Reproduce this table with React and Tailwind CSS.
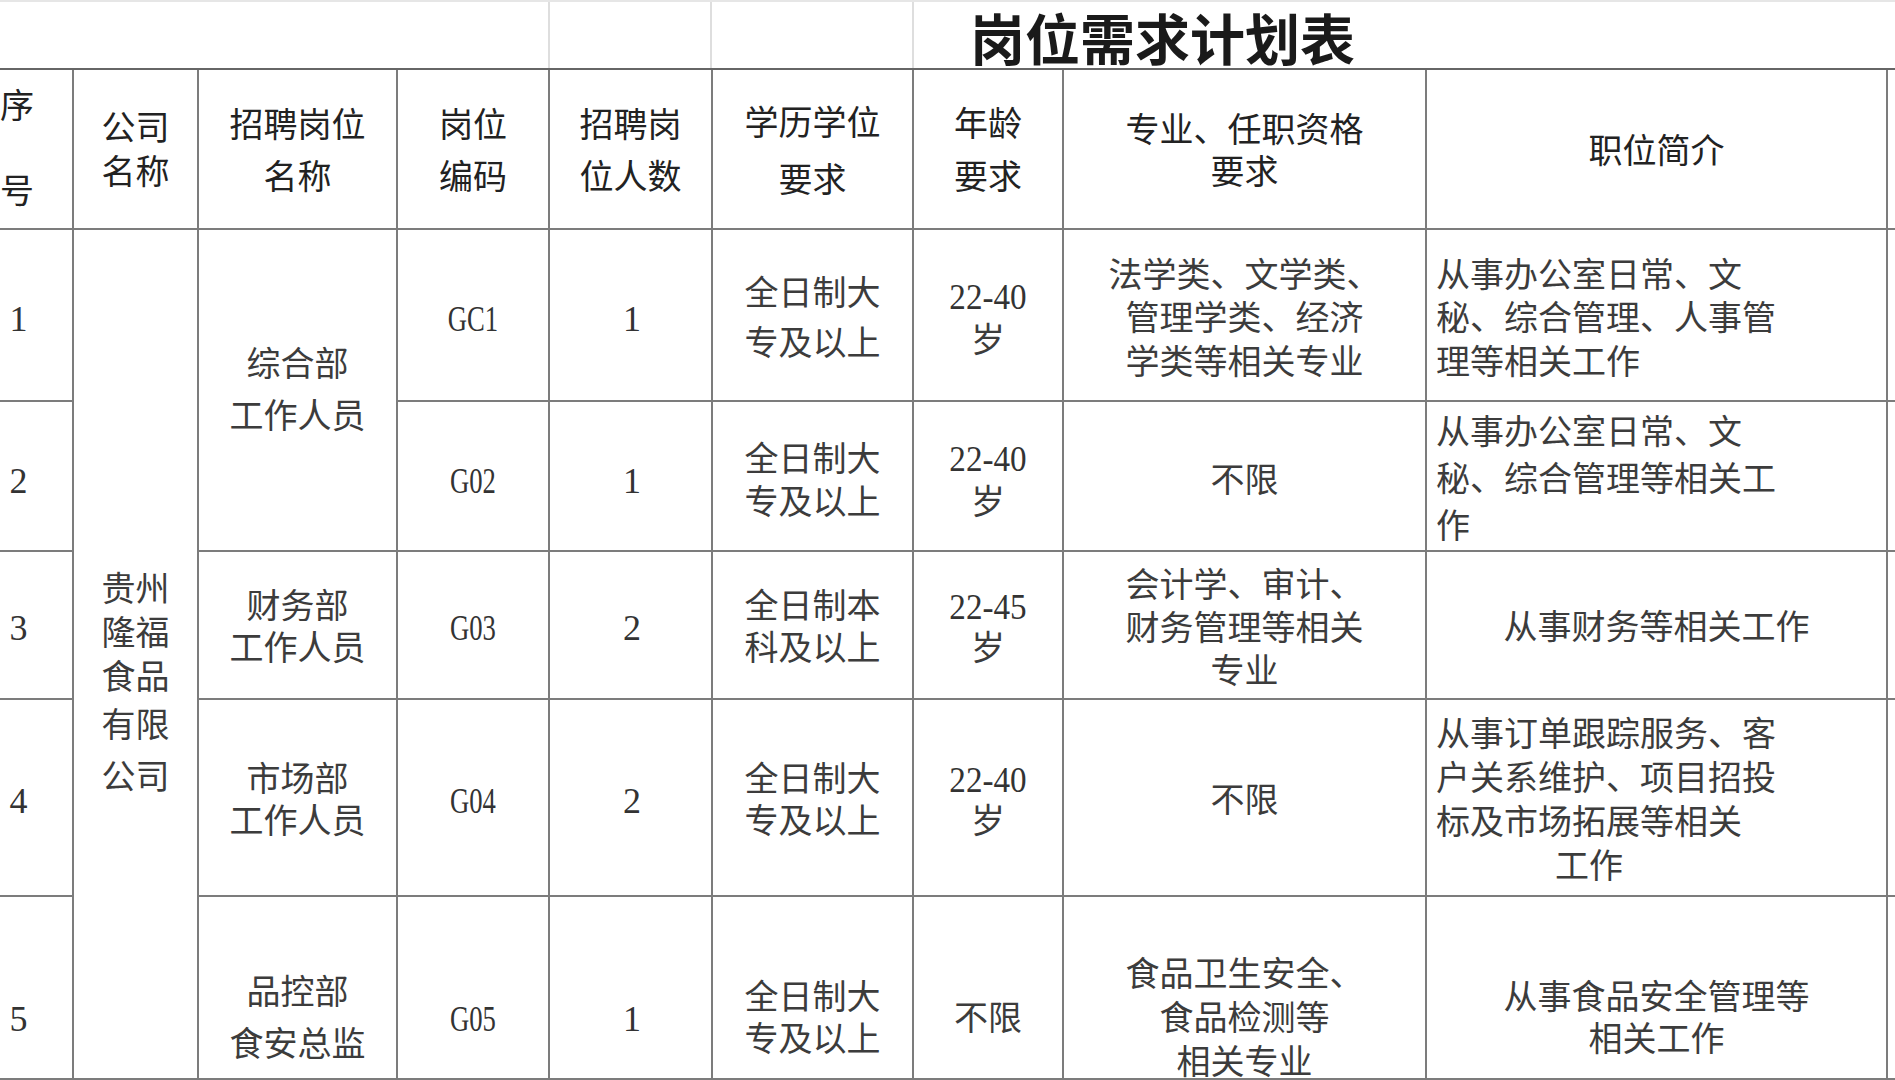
import React from "react";

function Cell({ className = "", children }) {
  return (
    <div
      className={
        "border-r-2 border-b-2 border-[#7c7c7c] flex flex-col justify-center items-center text-center overflow-hidden " +
        className
      }
    >
      {children}
    </div>
  );
}

function Lines({ lines, lh }) {
  return (
    <>
      {lines.map((l, i) => (
        <div key={i} className={"whitespace-nowrap " + lh}>
          {l}
        </div>
      ))}
    </>
  );
}

function Num({ children }) {
  return <span className="text-[36px] leading-none text-[#333] pl-[3px]">{children}</span>;
}

function Code({ children }) {
  return (
    <span className="inline-block text-[36px] leading-none text-[#333] scale-x-[0.74]">{children}</span>
  );
}

function Age({ a }) {
  return (
    <>
      <div className="text-[36px] leading-[44px] text-[#333] scale-x-[0.92]">{a}</div>
      <div className="leading-[44px]">岁</div>
    </>
  );
}

function R5({ className = "", children }) {
  return (
    <Cell className="justify-start">
      <div className={"h-[244px] shrink-0 w-full flex flex-col justify-center items-center " + className}>
        {children}
      </div>
    </Cell>
  );
}

export default function App() {
  return (
    <div className="w-[1895px] h-[1080px] overflow-hidden bg-white text-[34px] text-[#3c3c3c] font-['Liberation_Serif','Noto_Sans_CJK_SC',serif]">
      {/* title row */}
      <div className="flex h-[68px] border-t-2 border-[#e6e6e6] -ml-[38px]">
        <div className="w-[588px] border-r-2 border-[#dedede]" />
        <div className="w-[162px] border-r-2 border-[#dedede]" />
        <div className="w-[202px] border-r-2 border-[#dedede]" />
        <div className="flex-1 flex items-center pl-[56px] pt-[12px]">
          <span className="text-[55px] leading-none font-bold text-[#1a1a1a]">岗位需求计划表</span>
        </div>
      </div>

      <div className="grid -ml-[38px] w-max border-t-2 border-[#666] grid-cols-[112px_125px_199px_152px_163px_201px_150px_363px_461px_200px] grid-rows-[160px_172px_150px_148px_197px_183px]">
        {/* header */}
        <Cell className="text-[#222]">
          <div className="leading-[34px]">序</div>
          <div className="leading-[34px] mt-[51px]">号</div>
        </Cell>
        <Cell className="pt-[4px] text-[#222]">
          <Lines lines={["公司", "名称"]} lh="leading-[44px]" />
        </Cell>
        <Cell className="pt-[6px] text-[#222]">
          <Lines lines={["招聘岗位", "名称"]} lh="leading-[52px]" />
        </Cell>
        <Cell className="pt-[6px] text-[#222]">
          <Lines lines={["岗位", "编码"]} lh="leading-[52px]" />
        </Cell>
        <Cell className="pt-[6px] text-[#222]">
          <Lines lines={["招聘岗", "位人数"]} lh="leading-[52px]" />
        </Cell>
        <Cell className="pt-[6px] text-[#222]">
          <Lines lines={["学历学位", "要求"]} lh="leading-[57px]" />
        </Cell>
        <Cell className="pt-[4px] text-[#222]">
          <Lines lines={["年龄", "要求"]} lh="leading-[53px]" />
        </Cell>
        <Cell className="pt-[6px] text-[#222]">
          <Lines lines={["专业、任职资格", "要求"]} lh="leading-[42px]" />
        </Cell>
        <Cell className="pt-[6px] text-[#222]">
          <div className="leading-[40px]">职位简介</div>
        </Cell>
        <Cell />

        {/* row 1 */}
        <Cell className="pt-[8px]">
          <Num>1</Num>
        </Cell>
        <Cell className="row-span-5 justify-start">
          <div className="h-[911px] shrink-0 flex flex-col justify-center items-center">
            <Lines lines={["贵州", "隆福", "食品"]} lh="leading-[44px]" />
            <Lines lines={["有限", "公司"]} lh="leading-[52px]" />
          </div>
        </Cell>
        <Cell className="row-span-2 pt-[2px]">
          <Lines lines={["综合部", "工作人员"]} lh="leading-[52px]" />
        </Cell>
        <Cell className="pt-[8px]">
          <Code>GC1</Code>
        </Cell>
        <Cell className="pt-[8px]">
          <Num>1</Num>
        </Cell>
        <Cell className="pt-[8px]">
          <Lines lines={["全日制大", "专及以上"]} lh="leading-[50px]" />
        </Cell>
        <Cell className="pt-[8px]">
          <Age a="22-40" />
        </Cell>
        <Cell className="pt-[8px]">
          <Lines lines={["法学类、文学类、", "管理学类、经济", "学类等相关专业"]} lh="leading-[43.5px]" />
        </Cell>
        <Cell className="pt-[8px] items-start pl-[9px] text-left">
          <Lines lines={["从事办公室日常、文", "秘、综合管理、人事管", "理等相关工作"]} lh="leading-[43.5px]" />
        </Cell>
        <Cell />

        {/* row 2 */}
        <Cell className="pt-[9px]">
          <Num>2</Num>
        </Cell>
        <Cell className="pt-[9px]">
          <Code>G02</Code>
        </Cell>
        <Cell className="pt-[9px]">
          <Num>1</Num>
        </Cell>
        <Cell className="pt-[9px]">
          <Lines lines={["全日制大", "专及以上"]} lh="leading-[43px]" />
        </Cell>
        <Cell className="pt-[9px]">
          <Age a="22-40" />
        </Cell>
        <Cell className="pt-[9px]">
          <div className="leading-[40px]">不限</div>
        </Cell>
        <Cell className="pt-[6px] items-start pl-[9px] text-left">
          <Lines lines={["从事办公室日常、文", "秘、综合管理等相关工", "作"]} lh="leading-[47px]" />
        </Cell>
        <Cell />

        {/* row 3 */}
        <Cell className="pt-[6px]">
          <Num>3</Num>
        </Cell>
        <Cell className="pt-[6px]">
          <Lines lines={["财务部", "工作人员"]} lh="leading-[42px]" />
        </Cell>
        <Cell className="pt-[6px]">
          <Code>G03</Code>
        </Cell>
        <Cell className="pt-[6px]">
          <Num>2</Num>
        </Cell>
        <Cell className="pt-[6px]">
          <Lines lines={["全日制本", "科及以上"]} lh="leading-[42px]" />
        </Cell>
        <Cell className="pt-[6px]">
          <div className="text-[36px] leading-[42px] text-[#333] scale-x-[0.92]">22-45</div>
          <div className="leading-[42px]">岁</div>
        </Cell>
        <Cell className="pt-[6px]">
          <Lines lines={["会计学、审计、", "财务管理等相关", "专业"]} lh="leading-[43px]" />
        </Cell>
        <Cell className="pt-[6px]">
          <div className="leading-[40px]">从事财务等相关工作</div>
        </Cell>
        <Cell />

        {/* row 4 */}
        <Cell className="pt-[7px]">
          <Num>4</Num>
        </Cell>
        <Cell className="pt-[7px]">
          <Lines lines={["市场部", "工作人员"]} lh="leading-[42px]" />
        </Cell>
        <Cell className="pt-[7px]">
          <Code>G04</Code>
        </Cell>
        <Cell className="pt-[7px]">
          <Num>2</Num>
        </Cell>
        <Cell className="pt-[7px]">
          <Lines lines={["全日制大", "专及以上"]} lh="leading-[42px]" />
        </Cell>
        <Cell className="pt-[7px]">
          <div className="text-[36px] leading-[42px] text-[#333] scale-x-[0.92]">22-40</div>
          <div className="leading-[42px]">岁</div>
        </Cell>
        <Cell className="pt-[7px]">
          <div className="leading-[40px]">不限</div>
        </Cell>
        <Cell className="pt-[7px] items-start pl-[9px] text-left">
          <Lines lines={["从事订单跟踪服务、客", "户关系维护、项目招投", "标及市场拓展等相关"]} lh="leading-[44px]" />
          <div className="leading-[44px] pl-[119px] whitespace-nowrap">工作</div>
        </Cell>
        <Cell />

        {/* row 5 */}
        <R5>
          <Num>5</Num>
        </R5>
        <R5>
          <Lines lines={["品控部", "食安总监"]} lh="leading-[52px]" />
        </R5>
        <R5>
          <Code>G05</Code>
        </R5>
        <R5>
          <Num>1</Num>
        </R5>
        <R5>
          <Lines lines={["全日制大", "专及以上"]} lh="leading-[42px]" />
        </R5>
        <R5>
          <div className="leading-[40px]">不限</div>
        </R5>
        <R5>
          <Lines lines={["食品卫生安全、", "食品检测等", "相关专业"]} lh="leading-[44px]" />
        </R5>
        <R5>
          <Lines lines={["从事食品安全管理等", "相关工作"]} lh="leading-[42px]" />
        </R5>
        <Cell />
      </div>
    </div>
  );
}
